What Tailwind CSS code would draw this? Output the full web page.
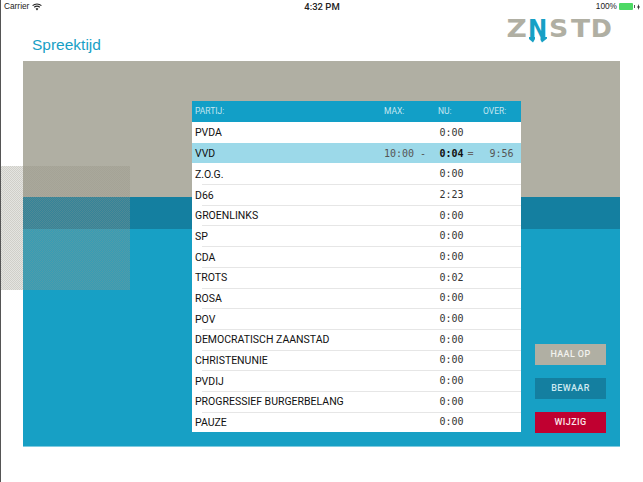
<!DOCTYPE html>
<html lang="en">
<head>
    <meta charset="UTF-8">
    <title>Spreektijd</title>
    <script src="https://cdn.jsdelivr.net/npm/@tailwindcss/browser@4"></script>
</head>
<body class="bg-white font-['Liberation_Sans',sans-serif] overflow-hidden">
    <div class="relative w-[643px] h-[482px] border-l border-[#555] overflow-hidden">

        <!-- status bar -->
        <div class="flex items-center justify-between h-[13px] pl-[3px] pr-[3px] text-[8.3px] leading-[13px] text-[#222]">
            <div class="w-[200px] flex items-center gap-[3px]">
                <span>Carrier</span>
                <svg width="10" height="8" viewBox="0 0 10 8" fill="none" stroke="#222" stroke-width="1.1"><path d="M0.6 2.6 C3 0.4 7 0.4 9.4 2.6"/><path d="M2.2 4.2 C3.8 2.9 6.2 2.9 7.8 4.2"/><path d="M5 7.4 L3.6 5.8 C4.4 5.2 5.6 5.2 6.4 5.8 Z" fill="#222" stroke="none"/></svg>
            </div>
            <span class="font-['Roboto',sans-serif] font-medium text-[9.5px]">4:32 PM</span>
            <div class="w-[200px] flex items-center justify-end gap-[1px]">
                <span class="mr-[1px]">100%</span>
                <div class="w-[14px] h-[7px] bg-[#4cd964] rounded-[1px]"></div>
                <div class="w-[1px] h-[3px] bg-[#555]"></div>
                <svg class="ml-[1px]" width="3" height="6" viewBox="0 0 3 6" fill="#222"><path d="M2 0 L0 3.4 H1.2 L1 6 L3 2.6 H1.8 Z"/></svg>
            </div>
        </div>

        <!-- title + logo -->
        <div class="flex justify-between h-[48px]">
            <h1 class="pl-[31px] pt-[22px] text-[15.5px] leading-[20px] text-[#17a0c5]">Spreektijd</h1>
            <div class="flex h-[32px] mr-[31px] pt-[2px] text-[25.5px] leading-[26px] font-bold font-['DejaVu_Sans',sans-serif] text-[#b0afa3] text-center">
                <span class="w-[21.2px] scale-x-110">Z</span>
                <span class="relative w-[21.2px] text-[#17a0c5]">
                    <span class="inline-block scale-x-90">N</span>
                    <svg class="absolute left-[1px] top-[22px]" width="20" height="6" viewBox="0 0 20 6" fill="#17a0c5"><path d="M1 0 H7 V2 L5 5.5 L1 2 Z"/><path d="M12.5 0 H19 V1.5 L14 5.5 L12.5 3 Z"/></svg>
                </span>
                <span class="w-[21.2px] scale-x-105">S</span>
                <span class="w-[21.2px] scale-x-110">T</span>
                <span class="w-[21.2px]">D</span>
            </div>
        </div>

        <!-- panel -->
        <div class="relative ml-[22px] w-[597px] h-[386px] bg-[#17a0c5] border-b border-[#7fcbe0]">
            <div class="h-[136px] bg-[#b0afa3]"></div>
            <div class="h-[32px] bg-[#147fa0]"></div>

            <!-- table -->
            <div class="absolute left-[169px] top-[40px] w-[329px] bg-white font-['Roboto',sans-serif]">
                <div class="grid grid-cols-[185px_57px_45px_42px] h-[21px] items-center pl-[3px] bg-[#129fc7] text-[8.5px] text-[#c4e6f0]">
                    <span>PARTIJ:</span><span class="pl-[4px]">MAX:</span><span class="pl-[1px]">NU:</span><span class="pl-[1px]">OVER:</span>
                </div>
                <div class="grid grid-cols-[185px_57px_45px_42px] h-[20.7px] items-center pl-[3px] text-[10.5px] text-[#111]">
                    <span class="pt-[2px]">PVDA</span><span></span><span class="font-['DejaVu_Sans_Mono',monospace] text-[10px] text-[#333] pl-[2.5px]">0:00</span><span></span>
                </div>
                <div class="grid grid-cols-[185px_57px_45px_42px] h-[20.7px] items-center pl-[3px] bg-[#9cd9e9] text-[10.5px] text-[#111]">
                    <span class="pt-[2px]">VVD</span>
                    <span class="font-['DejaVu_Sans_Mono',monospace] text-[10px] text-[#555] whitespace-pre pl-[4px]">10:00 -</span>
                    <span class="font-['DejaVu_Sans_Mono',monospace] text-[10px] font-bold whitespace-pre pl-[2.5px]">0:04<span class="font-normal text-[#666] ml-[4px]">=</span></span>
                    <span class="font-['DejaVu_Sans_Mono',monospace] text-[10px] text-[#555] pl-[7.5px]">9:56</span>
                </div>
                <div class="grid grid-cols-[185px_57px_45px_42px] h-[20.7px] items-center pl-[3px] text-[10.5px] text-[#111]">
                    <span class="pt-[2px]">Z.O.G.</span><span></span><span class="font-['DejaVu_Sans_Mono',monospace] text-[10px] text-[#333] pl-[2.5px]">0:00</span><span></span>
                </div>
                <div class="relative before:absolute before:left-[10px] before:right-0 before:top-0 before:h-px before:bg-[#e6e6e6] grid grid-cols-[185px_57px_45px_42px] h-[20.7px] items-center pl-[3px] text-[10.5px] text-[#111]">
                    <span class="pt-[2px]">D66</span><span></span><span class="font-['DejaVu_Sans_Mono',monospace] text-[10px] text-[#333] pl-[2.5px]">2:23</span><span></span>
                </div>
                <div class="relative before:absolute before:left-[10px] before:right-0 before:top-0 before:h-px before:bg-[#e6e6e6] grid grid-cols-[185px_57px_45px_42px] h-[20.7px] items-center pl-[3px] text-[10.5px] text-[#111]">
                    <span class="pt-[2px]">GROENLINKS</span><span></span><span class="font-['DejaVu_Sans_Mono',monospace] text-[10px] text-[#333] pl-[2.5px]">0:00</span><span></span>
                </div>
                <div class="relative before:absolute before:left-[10px] before:right-0 before:top-0 before:h-px before:bg-[#e6e6e6] grid grid-cols-[185px_57px_45px_42px] h-[20.7px] items-center pl-[3px] text-[10.5px] text-[#111]">
                    <span class="pt-[2px]">SP</span><span></span><span class="font-['DejaVu_Sans_Mono',monospace] text-[10px] text-[#333] pl-[2.5px]">0:00</span><span></span>
                </div>
                <div class="relative before:absolute before:left-[10px] before:right-0 before:top-0 before:h-px before:bg-[#e6e6e6] grid grid-cols-[185px_57px_45px_42px] h-[20.7px] items-center pl-[3px] text-[10.5px] text-[#111]">
                    <span class="pt-[2px]">CDA</span><span></span><span class="font-['DejaVu_Sans_Mono',monospace] text-[10px] text-[#333] pl-[2.5px]">0:00</span><span></span>
                </div>
                <div class="relative before:absolute before:left-[10px] before:right-0 before:top-0 before:h-px before:bg-[#e6e6e6] grid grid-cols-[185px_57px_45px_42px] h-[20.7px] items-center pl-[3px] text-[10.5px] text-[#111]">
                    <span class="pt-[2px]">TROTS</span><span></span><span class="font-['DejaVu_Sans_Mono',monospace] text-[10px] text-[#333] pl-[2.5px]">0:02</span><span></span>
                </div>
                <div class="relative before:absolute before:left-[10px] before:right-0 before:top-0 before:h-px before:bg-[#e6e6e6] grid grid-cols-[185px_57px_45px_42px] h-[20.7px] items-center pl-[3px] text-[10.5px] text-[#111]">
                    <span class="pt-[2px]">ROSA</span><span></span><span class="font-['DejaVu_Sans_Mono',monospace] text-[10px] text-[#333] pl-[2.5px]">0:00</span><span></span>
                </div>
                <div class="relative before:absolute before:left-[10px] before:right-0 before:top-0 before:h-px before:bg-[#e6e6e6] grid grid-cols-[185px_57px_45px_42px] h-[20.7px] items-center pl-[3px] text-[10.5px] text-[#111]">
                    <span class="pt-[2px]">POV</span><span></span><span class="font-['DejaVu_Sans_Mono',monospace] text-[10px] text-[#333] pl-[2.5px]">0:00</span><span></span>
                </div>
                <div class="relative before:absolute before:left-[10px] before:right-0 before:top-0 before:h-px before:bg-[#e6e6e6] grid grid-cols-[185px_57px_45px_42px] h-[20.7px] items-center pl-[3px] text-[10.5px] text-[#111]">
                    <span class="pt-[2px]">DEMOCRATISCH ZAANSTAD</span><span></span><span class="font-['DejaVu_Sans_Mono',monospace] text-[10px] text-[#333] pl-[2.5px]">0:00</span><span></span>
                </div>
                <div class="relative before:absolute before:left-[10px] before:right-0 before:top-0 before:h-px before:bg-[#e6e6e6] grid grid-cols-[185px_57px_45px_42px] h-[20.7px] items-center pl-[3px] text-[10.5px] text-[#111]">
                    <span class="pt-[2px]">CHRISTENUNIE</span><span></span><span class="font-['DejaVu_Sans_Mono',monospace] text-[10px] text-[#333] pl-[2.5px]">0:00</span><span></span>
                </div>
                <div class="relative before:absolute before:left-[10px] before:right-0 before:top-0 before:h-px before:bg-[#e6e6e6] grid grid-cols-[185px_57px_45px_42px] h-[20.7px] items-center pl-[3px] text-[10.5px] text-[#111]">
                    <span class="pt-[2px]">PVDIJ</span><span></span><span class="font-['DejaVu_Sans_Mono',monospace] text-[10px] text-[#333] pl-[2.5px]">0:00</span><span></span>
                </div>
                <div class="relative before:absolute before:left-[10px] before:right-0 before:top-0 before:h-px before:bg-[#e6e6e6] grid grid-cols-[185px_57px_45px_42px] h-[20.7px] items-center pl-[3px] text-[10.5px] text-[#111]">
                    <span class="pt-[2px]">PROGRESSIEF BURGERBELANG</span><span></span><span class="font-['DejaVu_Sans_Mono',monospace] text-[10px] text-[#333] pl-[2.5px]">0:00</span><span></span>
                </div>
                <div class="relative before:absolute before:left-[10px] before:right-0 before:top-0 before:h-px before:bg-[#e6e6e6] grid grid-cols-[185px_57px_45px_42px] h-[20.7px] items-center pl-[3px] text-[10.5px] text-[#111]">
                    <span class="pt-[2px]">PAUZE</span><span></span><span class="font-['DejaVu_Sans_Mono',monospace] text-[10px] text-[#333] pl-[2.5px]">0:00</span><span></span>
                </div>
            </div>

            <!-- buttons -->
            <div class="absolute left-[512px] top-[283px] flex flex-col gap-[13px] w-[71px] font-['Roboto',sans-serif] font-medium text-[9px] tracking-[0.4px] text-center leading-[21px]">
                <div class="h-[21px] bg-[#b0afa3] text-[#f2f2ee]">HAAL OP</div>
                <div class="h-[21px] bg-[#147fa0] text-[#cfeaf2]">BEWAAR</div>
                <div class="h-[21px] bg-[#c00030] text-[#fbe6ea]">WIJZIG</div>
            </div>
        </div>

        <!-- hatched square over panel -->
        <div class="absolute left-0 top-[166px] w-[129px] h-[124px] bg-[length:2px_2px] bg-[conic-gradient(rgba(150,148,135,0.45)_25%,rgba(150,148,135,0.25)_0_50%,rgba(150,148,135,0.45)_0_75%,rgba(150,148,135,0.25)_0)]"></div>
    </div>
</body>
</html>
